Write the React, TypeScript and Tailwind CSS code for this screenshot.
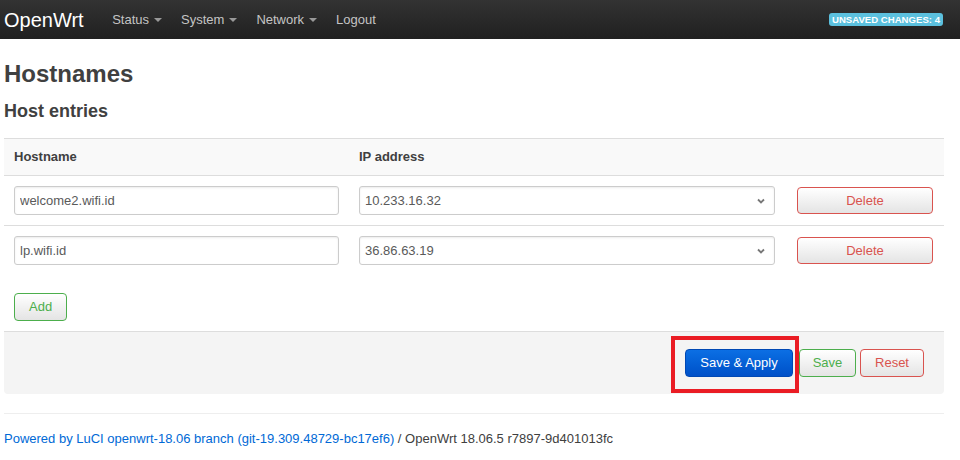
import React from 'react'

const font = { fontFamily: '"Liberation Sans", Arial, sans-serif' }

const Caret = () => (
  <span className="ml-[5px] inline-block h-0 w-0 border-x-[4px] border-t-[4px] border-x-transparent border-t-[#999] align-middle" />
)

const NavItem = ({ label, caret = true }: { label: string; caret?: boolean }) => (
  <span className="flex items-center px-[9.5px] text-[13px] text-[#c4c4c4]">
    {label}
    {caret && <Caret />}
  </span>
)

const Chevron = () => (
  <svg width="10" height="10" viewBox="0 0 10 10" className="text-[#777]">
    <path d="M2 3.5 L5 6.5 L8 3.5" fill="none" stroke="currentColor" strokeWidth="1.8" />
  </svg>
)

const textInput =
  'h-[29px] rounded-[3px] border border-[#ccc] bg-white px-[5px] text-[13px] text-[#5a5a5a] shadow-[inset_0_1px_2px_rgba(0,0,0,0.08)] outline-none'

const HostRow = ({ name, ip, last }: { name: string; ip: string; last?: boolean }) => (
  <div className={`flex items-center py-[10px] ${last ? '' : 'border-b border-[#ddd]'}`}>
    <div className="w-[345px] px-[10px]">
      <input className={`${textInput} w-full`} defaultValue={name} />
    </div>
    <div className="w-[436px] px-[10px]">
      <div className={`${textInput} flex w-full items-center justify-between pr-[8px]`}>
        <span>{ip}</span>
        <Chevron />
      </div>
    </div>
    <div className="pl-[12px]">
      <button className="h-[27px] w-[136px] rounded-[4px] border border-[#d9534f] bg-gradient-to-b from-white to-[#e4e4e4] text-[13px] text-[#d9534f]">
        Delete
      </button>
    </div>
  </div>
)

export default function App() {
  return (
    <div className="min-h-[460px] bg-white text-[#404040]" style={font}>
      {/* top bar */}
      <div className="flex h-[39px] items-center bg-gradient-to-b from-[#333] to-[#202020] pl-[4px] pr-[17px]">
        <span className="text-[20px] leading-none text-white">OpenWrt</span>
        <nav className="ml-[19px] flex items-center">
          <NavItem label="Status" />
          <NavItem label="System" />
          <NavItem label="Network" />
          <NavItem label="Logout" caret={false} />
        </nav>
        <span className="ml-auto rounded-[3px] bg-[#5bc0de] px-[3px] py-[1px] text-[9.6px] font-bold leading-[11px] text-white">
          UNSAVED CHANGES: 4
        </span>
      </div>

      <div className="px-[4px] pr-[16px]">
        <h2 className="mt-[21px] text-[24px] font-bold leading-[27px]">Hostnames</h2>
        <h3 className="mt-[14px] text-[18px] font-bold leading-[20px]">Host entries</h3>

        {/* table */}
        <div className="mt-[17px] border-t border-[#ddd]">
          <div className="flex h-[37px] items-center border-b border-[#ddd] bg-[#f9f9f9] text-[13px] font-bold">
            <div className="w-[345px] px-[10px]">Hostname</div>
            <div className="px-[10px]">IP address</div>
          </div>
          <HostRow name="welcome2.wifi.id" ip="10.233.16.32" />
          <HostRow name="lp.wifi.id" ip="36.86.63.19" last />
          <div className="px-[10px] pb-[10px] pt-[18px]">
            <button className="h-[28px] rounded-[4px] border border-[#4cae4c] bg-gradient-to-b from-white to-[#e4e4e4] px-[14px] text-[13px] text-[#4cae4c]">
              Add
            </button>
          </div>
        </div>

        {/* actions */}
        <div className="flex h-[63px] items-center justify-end gap-[4px] rounded-b-[4px] border-t border-[#ddd] bg-[#f4f4f4] pr-[20px]">
          <span className="relative">
            <button className="h-[28px] w-[108px] rounded-[4px] border border-[#0048b4] bg-gradient-to-b from-[#0c6fe4] to-[#0050c8] text-[13px] text-white">
              Save &amp; Apply
            </button>
            <span className="pointer-events-none absolute -bottom-[16px] -left-[14px] -right-[6px] -top-[13px] border-[4px] border-[#ea1c24]" />
          </span>
          <button className="ml-[2px] h-[28px] w-[57px] rounded-[4px] border border-[#4cae4c] bg-gradient-to-b from-white to-[#e4e4e4] text-[13px] text-[#4cae4c]">
            Save
          </button>
          <button className="h-[28px] w-[64px] rounded-[4px] border border-[#d9534f] bg-gradient-to-b from-white to-[#e4e4e4] text-[13px] text-[#d9534f]">
            Reset
          </button>
        </div>

        {/* footer */}
        <div className="mt-[19px] border-t border-[#eee] pt-[16px] text-[13px] leading-[17px]">
          <span className="text-[#0069d6]">Powered by LuCI openwrt-18.06 branch (git-19.309.48729-bc17ef6)</span>
          <span> / OpenWrt 18.06.5 r7897-9d401013fc</span>
        </div>
      </div>
    </div>
  )
}
